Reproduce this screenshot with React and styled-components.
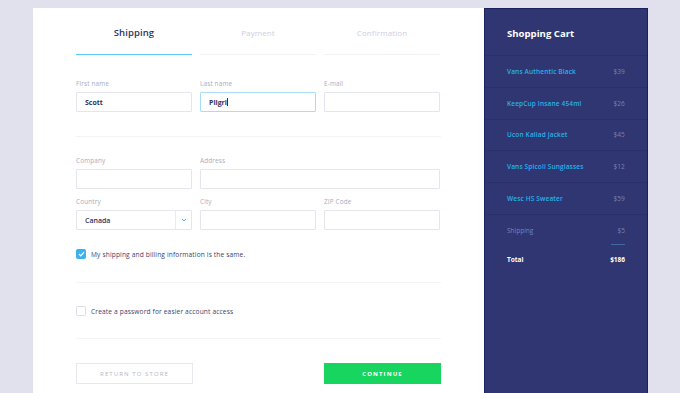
import React from "react";
import styled, { createGlobalStyle } from "styled-components";

const GlobalStyle = createGlobalStyle`
  html, body {
    margin: 0;
    padding: 0;
    background: #e0e1ec;
    font-family: "Open Sans", "Liberation Sans", sans-serif;
  }
  * { box-sizing: border-box; }
`;

const Page = styled.div`
  display: flex;
  padding: 8px 0 0 33px;
  height: 393px;
  overflow: hidden;
`;

const Card = styled.div`
  width: 451px;
  background: #fff;
  padding: 0 43px;
  display: flex;
  flex-direction: column;
`;

const Tabs = styled.div`
  display: grid;
  grid-template-columns: repeat(3, 116px);
  gap: 8px;
`;

const Tab = styled.div`
  padding: 19px 0 15px;
  text-align: center;
  font-size: ${({ $active }) => ($active ? "9.5px" : "8px")};
  line-height: 12px;
  letter-spacing: 0.1px;
  font-weight: ${({ $active }) => ($active ? 600 : 400)};
  color: ${({ $active }) => ($active ? "#2d3366" : "#cdcfdf")};
  border-bottom: ${({ $active }) => ($active ? "1.5px solid #5cc8f3" : "1.5px solid #f1f1f6")};
`;

const Grid = styled.div`
  display: grid;
  grid-template-columns: ${({ $cols }) => $cols};
  column-gap: 8px;
  row-gap: 10px;
  margin-top: ${({ $top }) => $top}px;
`;

const Field = styled.div`
  display: flex;
  flex-direction: column;
  gap: 4px;
`;

const Label = styled.span`
  font-size: 6.4px;
  line-height: 8px;
  letter-spacing: 0.15px;
  color: #a8aac2;
`;

const Input = styled.div`
  height: 20px;
  border: 1px solid ${({ $focus }) => ($focus ? "#a9dcf6" : "#e4e5ef")};
  border-radius: 1px;
  display: flex;
  align-items: center;
  padding-left: 8px;
  font-size: 7px;
  font-weight: 700;
  color: #2d3366;
`;

const Caret = styled.span`
  display: inline-block;
  width: 0.7px;
  height: 8px;
  background: #2d3366;
  margin-left: 0.5px;
`;

const Select = styled(Input)`
  justify-content: space-between;
  font-weight: 600;
`;

const SelectArrow = styled.div`
  width: 16px;
  height: 100%;
  border-left: 1px solid #e9eaf2;
  display: flex;
  align-items: center;
  justify-content: center;
`;

const Divider = styled.div`
  height: 1px;
  background: #f3f3f8;
  margin-top: ${({ $top }) => $top}px;
`;

const CheckRow = styled.div`
  display: flex;
  align-items: center;
  gap: 5px;
  margin-top: ${({ $top }) => $top}px;
  font-size: 6.6px;
  letter-spacing: 0.15px;
  color: #3a3f6e;
`;

const Box = styled.div`
  width: 10px;
  height: 10px;
  border-radius: 1.5px;
  background: ${({ $checked }) => ($checked ? "#3fb0ee" : "#fff")};
  border: 1px solid ${({ $checked }) => ($checked ? "#3fb0ee" : "#dcdde8")};
  display: flex;
  align-items: center;
  justify-content: center;
`;

const Buttons = styled.div`
  display: flex;
  justify-content: space-between;
  margin-top: 24px;
`;

const Button = styled.div`
  width: 117px;
  height: 21px;
  display: flex;
  align-items: center;
  justify-content: center;
  font-size: 6px;
  letter-spacing: 1.1px;
  font-weight: ${({ $primary }) => ($primary ? 700 : 400)};
  color: ${({ $primary }) => ($primary ? "#fff" : "#b3b5cb")};
  background: ${({ $primary }) => ($primary ? "#17d55f" : "#fff")};
  border: 1px solid ${({ $primary }) => ($primary ? "#17d55f" : "#e6e7f0")};
`;

const Cart = styled.div`
  width: 164px;
  background: #2f3672;
  border: 1px solid #1b2060;
  border-bottom: none;
  display: flex;
  flex-direction: column;
`;

const CartTitle = styled.div`
  height: 47px;
  padding: 18px 0 0 22px;
  font-size: 9.6px;
  font-weight: 700;
  color: #fff;
  border-bottom: 1px solid #2a306a;
`;

const CartRow = styled.div`
  height: 31.8px;
  padding: 0 22px;
  display: flex;
  align-items: center;
  justify-content: space-between;
  border-bottom: 1px solid #2a306a;
  font-size: 6.5px;
  letter-spacing: 0.15px;
  font-weight: 600;
  color: #27b3ea;
`;

const Price = styled.span`
  font-weight: 400;
  color: #7c82b3;
`;

const SummaryRow = styled.div`
  padding: 0 22px;
  display: flex;
  justify-content: space-between;
  margin-top: ${({ $top }) => $top}px;
  font-size: 6.5px;
  font-weight: ${({ $bold }) => ($bold ? 700 : 400)};
  color: ${({ $bold }) => ($bold ? "#fff" : "#7c82b3")};
`;

const ShortRule = styled.div`
  align-self: flex-end;
  width: 14px;
  height: 1px;
  background: #3e6aa6;
  margin: 9px 22px 0 0;
`;

const items = [
  ["Vans Authentic Black", "$39"],
  ["KeepCup Insane 454ml", "$26"],
  ["Ucon Kaliad Jacket", "$45"],
  ["Vans Spicoli Sunglasses", "$12"],
  ["Wesc HS Sweater", "$59"],
];

export default function App() {
  return (
    <>
      <GlobalStyle />
      <Page>
        <Card>
          <Tabs>
            <Tab $active>Shipping</Tab>
            <Tab>Payment</Tab>
            <Tab>Confirmation</Tab>
          </Tabs>

          <Grid $cols="116px 116px 116px" $top={25}>
            <Field>
              <Label>First name</Label>
              <Input>Scott</Input>
            </Field>
            <Field>
              <Label>Last name</Label>
              <Input $focus>
                Pilgri
                <Caret />
              </Input>
            </Field>
            <Field>
              <Label>E-mail</Label>
              <Input />
            </Field>
          </Grid>

          <Divider $top={24} />

          <Grid $cols="116px 240px" $top={20}>
            <Field>
              <Label>Company</Label>
              <Input />
            </Field>
            <Field>
              <Label>Address</Label>
              <Input />
            </Field>
          </Grid>

          <Grid $cols="116px 116px 116px" $top={9}>
            <Field>
              <Label>Country</Label>
              <Select>
                Canada
                <SelectArrow>
                  <svg width="6" height="4" viewBox="0 0 6 4">
                    <path d="M1 1l2 2 2-2" fill="none" stroke="#3fb0ee" strokeWidth="1" />
                  </svg>
                </SelectArrow>
              </Select>
            </Field>
            <Field>
              <Label>City</Label>
              <Input />
            </Field>
            <Field>
              <Label>ZIP Code</Label>
              <Input />
            </Field>
          </Grid>

          <CheckRow $top={19}>
            <Box $checked>
              <svg width="7" height="6" viewBox="0 0 7 6">
                <path d="M1 3l1.8 1.8L6 1.2" fill="none" stroke="#fff" strokeWidth="1.2" />
              </svg>
            </Box>
            My shipping and billing information is the same.
          </CheckRow>

          <Divider $top={23} />

          <CheckRow $top={23}>
            <Box />
            Create a password for easier account access
          </CheckRow>

          <Divider $top={22} />

          <Buttons>
            <Button>RETURN TO STORE</Button>
            <Button $primary>CONTINUE</Button>
          </Buttons>
        </Card>

        <Cart>
          <CartTitle>Shopping Cart</CartTitle>
          {items.map(([name, price]) => (
            <CartRow key={name}>
              {name}
              <Price>{price}</Price>
            </CartRow>
          ))}
          <SummaryRow $top={11}>
            <span>Shipping</span>
            <span>$5</span>
          </SummaryRow>
          <ShortRule />
          <SummaryRow $bold $top={10}>
            <span>Total</span>
            <span>$186</span>
          </SummaryRow>
        </Cart>
      </Page>
    </>
  );
}
